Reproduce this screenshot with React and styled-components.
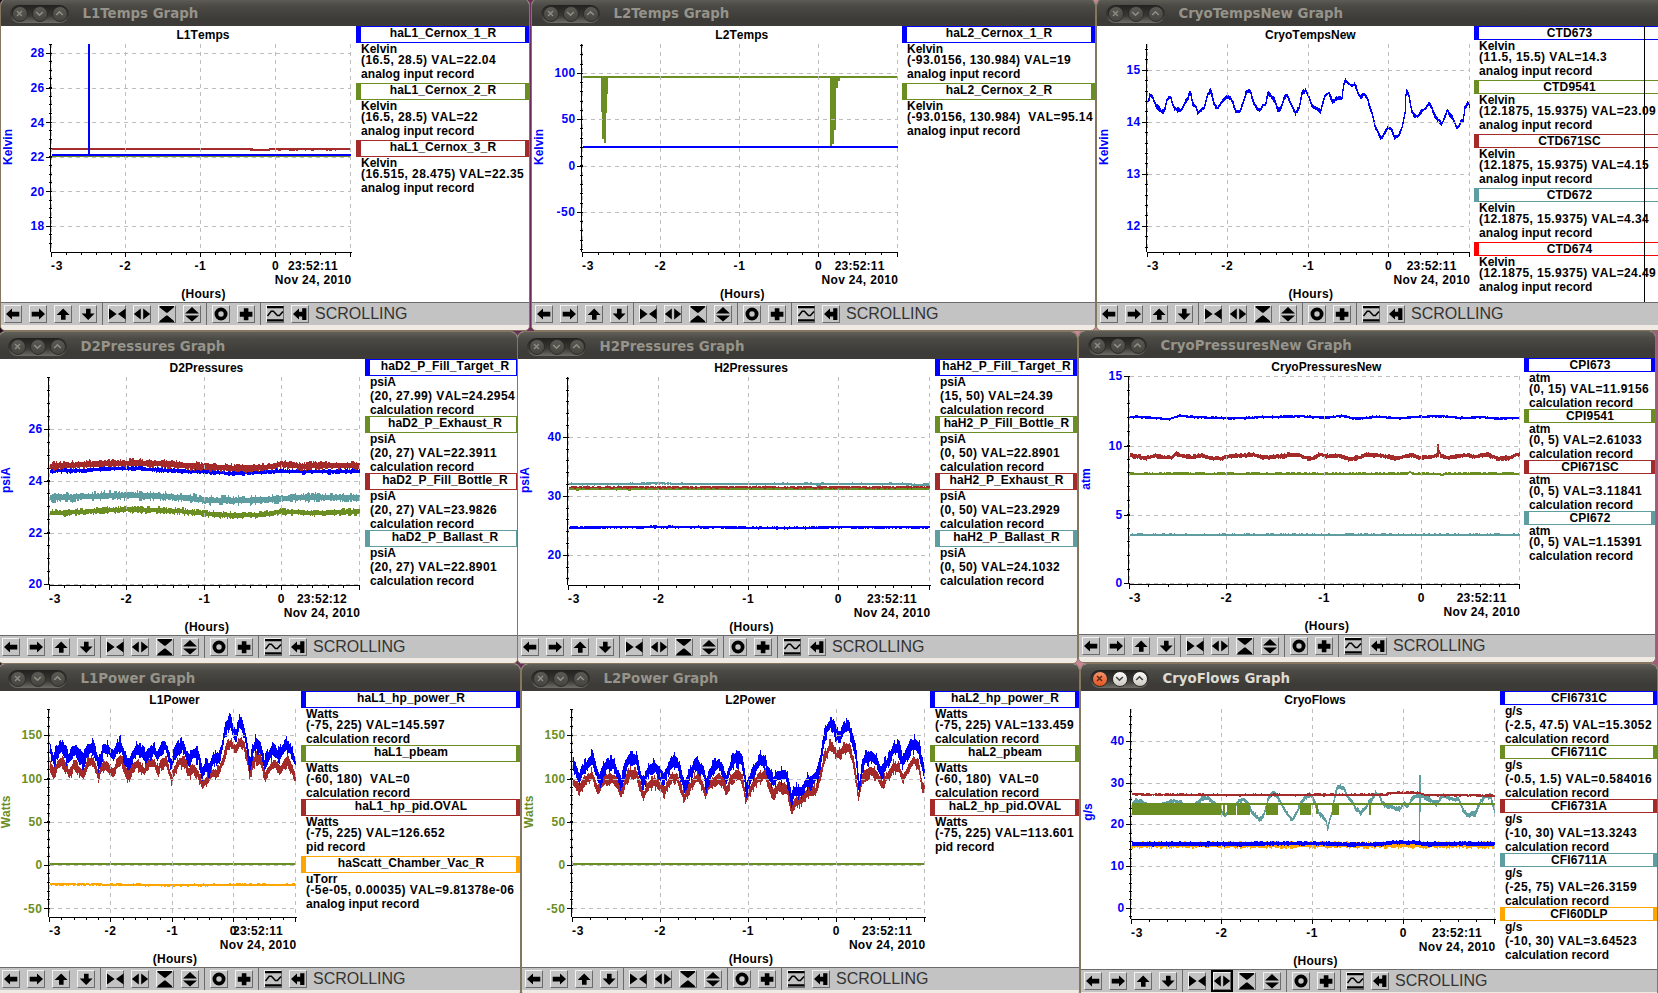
import React from "react";
import styled, { createGlobalStyle, css } from "styled-components";

const BLUE = "#0000ff";
const OLIVE = "#6b8e23";
const BROWN = "#a52a2a";
const TEAL = "#5f9ea0";
const ORANGE = "#ffa500";
const RED = "#ff0000";

const Global = createGlobalStyle`
  html, body { margin: 0; padding: 0; overflow: hidden; }
  * { box-sizing: border-box; }
`;

const Desktop = styled.main`
  position: relative;
  width: 1658px;
  height: 993px;
  overflow: hidden;
  background: linear-gradient(90deg, #1f0a1e 0, #6b2d5c 530px, #cf8797 1085px, #a35a7c 1658px);
`;

const Frame = styled.section`
  position: absolute;
  left: ${(p) => p.$x - 1}px;
  top: ${(p) => p.$y - 28}px;
  width: ${(p) => p.$w + 2}px;
  display: flex;
  flex-direction: column;
  border: 1px solid #85775f;
  border-radius: 7px 7px 5px 5px;
  overflow: hidden;
  background: #efebe4;
`;

const TitleBar = styled.header`
  height: 27px;
  flex: none;
  display: flex;
  align-items: center;
  padding: 2px 0 0 9px;
  background: linear-gradient(#605f58 0, #4b4a45 25%, #3c3b37 75%);
`;

const Pill = styled.div`
  display: flex;
  align-items: center;
  justify-content: center;
  gap: 4px;
  width: 59px;
  height: 18px;
  margin-right: 13.5px;
  border-radius: 9px;
  background: linear-gradient(#22211f, #3a3935 60%, #6e6d66);
`;

const Knob = styled.span`
  width: 16px;
  height: 16px;
  border-radius: 50%;
  border: 1px solid #2e2d2a;
  background: linear-gradient(#5b5a55, #45443f);
  color: #8f8d86;
  display: flex;
  align-items: center;
  justify-content: center;
  ${(p) =>
    p.$active &&
    css`
      background: ${p.$close ? "linear-gradient(#f6946c, #e2531f)" : "linear-gradient(#ffffff, #c9c5bd)"};
      color: ${p.$close ? "#5e2410" : "#44433e"};
    `}
  svg { width: 13px; height: 13px; }
`;

const Title = styled.h1`
  margin: 0;
  font: bold 13.33px/20px "DejaVu Sans", sans-serif;
  color: ${(p) => (p.$active ? "#dfdbd2" : "#96938a")};
  white-space: pre;
`;

const Content = styled.div`
  display: flex;
  height: ${(p) => p.$h}px;
  background: #fff;
  position: relative;
`;

const Plot = styled.svg`
  flex: none;
  display: block;
  width: ${(p) => p.$w}px;
  height: ${(p) => p.$h}px;
  font: bold 12px "Liberation Sans", Arial, sans-serif;
  font-kerning: none;
  fill: #000;
`;

const Legend = styled.aside`
  flex: 1;
  min-width: 0;
  display: flex;
  flex-direction: column;
  font: bold 12px/14px "Liberation Sans", Arial, sans-serif;
  font-kerning: none;
  color: #000;
`;

const Entry = styled.div`
  height: ${(p) => p.$h}px;
  flex: none;
`;

const Signal = styled.div`
  height: ${(p) => p.$h}px;
  display: flex;
  justify-content: center;
  padding-left: ${(p) => (p.$r === 1 ? 4 : 0)}px;
  border: 1px solid ${(p) => p.$c};
  border-left-width: 5px;
  border-right-width: ${(p) => p.$r}px;
  line-height: 12px;
  white-space: pre;
  margin-bottom: -1px;
`;

const Line = styled.div`
  height: ${(p) => p.$h}px;
  padding-left: 5px;
  white-space: pre;
`;

const Seam = styled.i`
  position: absolute;
  left: ${(p) => p.$x}px;
  top: 0;
  width: 1px;
  height: 100%;
  background: #000;
`;

const Toolbar = styled.nav`
  height: 23px;
  display: flex;
  align-items: center;
  padding: 0 0 0 3px;
  border-top: 1px solid #6b6b6b;
  background: #c3c3c3;
  margin-bottom: 5px;
`;

const Group = styled.div`
  display: flex;
  gap: 7px;
  height: 18px;
`;

const Divider = styled.span`
  width: 1px;
  height: 22px;
  margin: 0 5px;
  background: #6b6b6b;
`;

const ToolButton = styled.button`
  width: 18px;
  height: 18px;
  padding: 0;
  border: 1px solid;
  border-color: #f2f2f2 #6b6b6b #6b6b6b #f2f2f2;
  background: #c3c3c3;
  outline: ${(p) => (p.$focused ? "2px solid #000" : "none")};
  svg { display: block; margin: -1px; width: 18px; height: 18px; }
`;

const Status = styled.span`
  margin-left: 6px;
  font: 16px/22px "Liberation Sans", Arial, sans-serif;
  font-kerning: none;
  color: #333;
`;

const ICONS = {
  left: <path d="M2 9 8 3.5v3.3h7.3v4.6H8v3.1z" />,
  right: <path d="M16 9 10 3.5v3.3H2.7v4.6H10v3.1z" />,
  up: <path d="M9.2 3.4 15.6 10h-4v4.8H7V10H2.6z" />,
  down: <path d="M9.2 15 15.6 8.6h-4V3.8H7v4.8H2.6z" />,
  hIn: <path d="M1 3.4 8.6 9 1 14.6zM17.6 3.4 10 9l7.6 5.6z" />,
  hOut: <path d="M7.8 3.4 .8 9l7 5.6zM10.2 3.4l7 5.6-7 5.6z" />,
  vIn: <path d="M1.5 1H16v1.2L9.5 7.8h-1.2L1.5 2.2zM8.3 10.4h1.2L16 16v1.2H1.5V16z" />,
  vOut: <path d="M9 2 16 8.4H2zM2 10.4h14L9 16.6z" />,
  circle: <circle cx="9" cy="9" r="4.6" fill="none" stroke="#000" strokeWidth="3.8" />,
  plus: <path d="M6.8 3.2h4.6v3.6h4v5h-4v3.4H6.8v-3.4h-4v-5h4z" />,
  wave: (
    <>
      <path d="M1 1h16.4v2.2H1zM1 14.2h16.4v2.2H1z" />
      <path d="M1.5 11 5.2 6.2h2.2l4 4.4h2L17 6.4" fill="none" stroke="#000" strokeWidth="1.5" />
    </>
  ),
  enter: <path d="M2 9 8 3.6v3.2h3.2V3.2h4.2V15h-4.2v-3.6H8v3.1z" />,
};

const TOOL_GROUPS = [
  ["left", "right", "up", "down"],
  ["hIn", "hOut", "vIn", "vOut"],
  ["circle", "plus"],
  ["wave", "enter"],
];

// Extra advance that widens digits, blanks and punctuation to whole pixels.
function tracking(text) {
  let extra = 0;
  for (const ch of text) {
    if (/[0-9_]/.test(ch)) extra += 0.33;
    else if (/[ ,.]/.test(ch)) extra += 0.67;
    else if (/[()-]/.test(ch)) extra += 1;
  }
  return extra / text.length;
}

function makeRandom(seed) {
  let s = Math.round(seed) * 7919 + 17;
  return () => {
    s = (s * 1103515245 + 12345) % 2147483648;
    return s / 2147483648;
  };
}

function interpolate(points, x) {
  if (x <= points[0][0]) return points[0][1];
  for (let i = 1; i < points.length; i++) {
    if (x <= points[i][0]) {
      const [ax, ay] = points[i - 1];
      const [bx, by] = points[i];
      return ay + ((by - ay) * (x - ax)) / (bx - ax);
    }
  }
  return points[points.length - 1][1];
}

// One vertical run of pixels per column, joined to the previous column.
function bandPath(points, thick, noise, seed, x0, x1) {
  const rnd = makeRandom(seed);
  let d = "";
  let prev = null;
  let up = 0;
  let down = 0;
  for (let x = Math.round(x0); x < x1; x++) {
    const c = interpolate(points, x);
    if (rnd() < 0.7) {
      up = noise * rnd() ** 2;
      down = noise * rnd() ** 2;
    }
    let top = c - thick / 2 - up;
    let bottom = c + thick / 2 + down;
    if (prev !== null) {
      top = Math.min(top, prev - 0.5);
      bottom = Math.max(bottom, prev + 0.5);
    }
    const a = Math.round(top);
    const b = Math.max(a + 1, Math.round(bottom));
    d += `M${x} ${a}h1V${b}h-1z`;
    prev = c;
  }
  return d;
}

const pairs = (text) => text.trim().split(/\s+/).map((p) => p.split(",").map(Number));

function Trace({ series, plot, index }) {
  const [kx, dx, ky, dy] = series.scale || plot.scale;
  const px = (x) => x / kx + dx;
  const py = (y) => y / ky + dy;
  return (
    <g fill={series.color} shapeRendering="crispEdges">
      {series.points && (
        <path
          d={bandPath(
            pairs(series.points).map(([x, y]) => [px(x), py(y)]),
            series.thick,
            series.noise || 0,
            index * 31 + plot.x1,
            plot.x0,
            plot.x1
          )}
        />
      )}
      {(series.bars || []).map(([a, b, top, bottom], i) => (
        <rect key={i} x={px(a)} width={px(b) - px(a)} y={py(top)} height={py(bottom) - py(top)} />
      ))}
    </g>
  );
}

function Chart({ plot, height }) {
  const { x0, x1, bottom, hours, major, minor, axisColor } = plot;
  const top = 18;
  const xMinor = [];
  for (let k = 1; k < 20; k++) if (k % 5) xMinor.push(x1 - ((x1 - x0) * k) / 20);
  const [[va, ya], [vb, yb]] = [major[0], major[major.length - 1]];
  const perUnit = (yb - ya) / (vb - va);
  const yMinor = [];
  for (let k = -200; k < 200; k++) {
    const y = ya + k * minor * Math.abs(perUnit);
    if (y >= top && y <= bottom) yMinor.push(y);
  }
  const center = (x0 + x1) / 2;
  const snap = (v) => Math.floor(v) + 0.5;
  const label = (text, x, y, anchor = "middle", fill) => (
    <text key={text + x} x={x} y={y} textAnchor={anchor} fill={fill} letterSpacing={tracking(text)} xmlSpace="preserve">
      {text}
    </text>
  );
  return (
    <Plot $w={Math.floor(x1 + 5.7)} $h={height}>
      {label(plot.title, center + 2, 13)}
      {plot.series.map((s, i) => (
        <Trace key={i} series={s} plot={plot} index={i} />
      ))}
      <g stroke="#bebebe" strokeDasharray="4 4" shapeRendering="crispEdges">
        {major.map(([v, y]) => (
          <path key={v} d={`M${x0} ${snap(y)}H${x1}`} />
        ))}
        {[x0, ...hours, x1].map((x) => (
          <path key={x} d={`M${snap(x)} ${top}V${bottom}`} />
        ))}
      </g>
      <g stroke="#000" shapeRendering="crispEdges">
        <path d={`M${snap(x0) - 1} ${top}V${bottom}M${snap(x0) - 1} ${snap(bottom)}H${x1 + 1}`} />
        {major.map(([v, y]) => (
          <path key={v} d={`M${x0 - 6} ${snap(y)}H${x0}`} />
        ))}
        {yMinor.map((y) => (
          <path key={y} d={`M${x0 - 3} ${snap(y)}H${x0}`} />
        ))}
        {[x0, ...hours, x1].map((x) => (
          <path key={x} d={`M${snap(x)} ${bottom}v5`} />
        ))}
        {xMinor.map((x) => (
          <path key={x} d={`M${snap(x)} ${bottom}v3`} />
        ))}
      </g>
      {major.map(([v, y]) => label(String(v), x0 - 7, y + 4, "end", axisColor))}
      {label("-3", x0 + 5.5, bottom + 17.5)}
      {label("-2", hours[0], bottom + 17.5)}
      {label("-1", hours[1], bottom + 17.5)}
      {label("0", hours[2], bottom + 17.5)}
      {label(plot.time, x1 - 37.5, bottom + 17.5)}
      {label("Nov 24, 2010", x1 + 1, bottom + 32, "end")}
      {label("(Hours)", center + 2.5, bottom + 46)}
      <text transform="translate(11 121) rotate(-90)" textAnchor="middle" fill={axisColor}>
        {plot.unit}
      </text>
    </Plot>
  );
}

function GraphWindow({ win }) {
  const { x, y, w, name, active, plot, legend } = win;
  const height = win.height || 276;
  return (
    <Frame $x={x} $y={y} $w={w}>
      <TitleBar>
        <Pill>
          <Knob $active={active} $close>
            <svg viewBox="0 0 13 13"><path d="M4 4l5 5M9 4l-5 5" stroke="currentColor" strokeWidth="1.4" /></svg>
          </Knob>
          <Knob $active={active}>
            <svg viewBox="0 0 13 13"><path d="M3.2 5l3.3 3.2L9.8 5" fill="none" stroke="currentColor" strokeWidth="1.6" /></svg>
          </Knob>
          <Knob $active={active}>
            <svg viewBox="0 0 13 13"><path d="M3.2 8l3.3-3.2L9.8 8" fill="none" stroke="currentColor" strokeWidth="1.6" /></svg>
          </Knob>
        </Pill>
        <Title $active={active}>{name} Graph</Title>
      </TitleBar>
      <Content $h={height}>
        <Chart plot={plot} height={height} />
        <Legend>
          {legend.map((e) => (
            <Entry key={e.name} $h={e.pitch}>
              <Signal $h={e.head} $c={e.color} $r={win.endCap ?? 4}>
                <span style={{ letterSpacing: tracking(e.name) }}>{e.name}</span>
              </Signal>
              {e.lines.map((t, i) => (
                <Line key={i} $h={i === 0 ? e.lead : 14}>
                  <span style={{ letterSpacing: tracking(t) }}>{t}</span>
                </Line>
              ))}
            </Entry>
          ))}
        </Legend>
        {win.seam && <Seam $x={win.seam} />}
      </Content>
      <Toolbar>
        {TOOL_GROUPS.map((g, i) => (
          <React.Fragment key={i}>
            {i > 0 && <Divider />}
            <Group>
              {g.map((id) => (
                <ToolButton key={id} aria-label={id} $focused={win.focused === id}>
                  <svg viewBox="0 0 18 18">{ICONS[id]}</svg>
                </ToolButton>
              ))}
            </Group>
          </React.Fragment>
        ))}
        <Status>SCROLLING</Status>
      </Toolbar>
    </Frame>
  );
}

const entry = (name, color, unit, value, record, head, lead, pitch) => ({
  name, color, head, lead, pitch, lines: [unit, value, record],
});

const AI = "analog input record";
const CALC = "calculation record";

const WINDOWS = [
  {
    name: "L1Temps", x: 1, y: 26, w: 528,
    plot: {
      title: "L1Temps", unit: "Kelvin", axisColor: BLUE, time: "23:52:11",
      x0: 50.5, x1: 349.5, hours: [124.3, 199.4, 274.5], bottom: 226, minor: 0.5,
      major: [[28, 53 - 26], [26, 62.3], [24, 96.5], [22, 131], [20, 165.5], [18, 200.3]],
      scale: [2.904, -1, 3, -26],
      series: [
        { color: BROWN, thick: 1.8, points: "150,447 720,447 730,449 775,450 785,447 860,448 1017,448", noise: 0.6 },
        { color: OLIVE, thick: 1.5, points: "150,469 1017,469" },
        { color: BLUE, thick: 2, points: "150,465 1017,465", bars: [[256, 261.5, 132, 465]] },
      ],
    },
    legend: [
      entry("haL1_Cernox_1_R", BLUE, "Kelvin", "(16.5, 28.5) VAL=22.04", AI, 17, 11, 57),
      entry("haL1_Cernox_2_R", OLIVE, "Kelvin", "(16.5, 28.5) VAL=22", AI, 17, 11, 57),
      entry("haL1_Cernox_3_R", BROWN, "Kelvin", "(16.515, 28.475) VAL=22.35", AI, 17, 11, 57),
    ],
  },
  {
    name: "L2Temps", x: 532, y: 26, w: 563,
    plot: {
      title: "L2Temps", unit: "Kelvin", axisColor: BLUE, time: "23:52:11",
      x0: 50.5, x1: 365.2, hours: [128.4, 207.6, 286.4], bottom: 226, minor: 10,
      major: [[100, 47.3], [50, 93.3], [0, 140.3], [-50, 186.3]],
      scale: [2.703, -7, 3, -26],
      series: [
        {
          color: OLIVE, thick: 2, points: "155,231 1006,231",
          bars: [
            [206, 210, 231, 335], [209, 215, 231, 417], [214, 219, 231, 430], [217, 222, 231, 338], [220, 224.5, 231, 282],
            [825, 830, 231, 445], [829, 834, 231, 432], [833, 841, 231, 391], [840, 846, 231, 265], [845, 851, 231, 242],
          ],
        },
        { color: BLUE, thick: 2, points: "155,440 1006,440" },
      ],
    },
    legend: [
      entry("haL2_Cernox_1_R", BLUE, "Kelvin", "(-93.0156, 130.984) VAL=19", AI, 17, 11, 57),
      entry("haL2_Cernox_2_R", OLIVE, "Kelvin", "(-93.0156, 130.984)  VAL=95.14", AI, 17, 11, 57),
    ],
  },
  {
    name: "CryoTempsNew", x: 1097, y: 26, w: 567, seam: 547,
    plot: {
      title: "CryoTempsNew", unit: "Kelvin", axisColor: BLUE, time: "23:52:11",
      x0: 50.5, x1: 372.2, hours: [130.3, 211.4, 291.5], bottom: 226, minor: 0.2,
      major: [[15, 44.3], [14, 96.3], [13, 148.3], [12, 200.3]],
      scale: [2.761, -7, 3, -26],
      series: [
        {
          color: BLUE, thick: 2.4, noise: 1.8,
          points: `158,315 163,285 170,290 180,318 190,325 195,335 203,335 210,300 220,290 228,320 240,330 250,332 260,310 267,300
            275,272 280,308 290,320 296,340 305,330 313,325 322,285 332,272 340,310 350,325 360,310 370,295 382,290 392,305 400,335
            412,335 420,310 430,275 440,272 450,310 460,325 468,332 475,315 482,315 490,278 500,290 508,300 516,330 525,325 535,290
            542,285 550,305 565,340 575,325 583,280 593,270 602,290 612,320 622,325 635,333 645,290 658,278 668,305 680,295 693,295
            698,255 703,240 712,250 722,258 730,252 738,280 748,292 755,280 765,298 770,320 778,345 785,380 795,400 802,418 808,405
            815,395 820,383 830,385 838,412 850,408 860,380 867,340 870,280 873,270 880,295 885,330 893,345 903,350 912,335 925,325
            935,308 942,325 950,345 960,360 970,370 978,350 985,330 992,345 1000,355 1010,382 1017,380 1022,365 1028,365 1032,325
            1042,310 1047,318`,
        },
      ],
    },
    legend: [
      entry("CTD673", BLUE, "Kelvin", "(11.5, 15.5) VAL=14.3", AI, 14, 11, 54),
      entry("CTD9541", OLIVE, "Kelvin", "(12.1875, 15.9375) VAL=23.09", AI, 14, 11, 54),
      entry("CTD671SC", BROWN, "Kelvin", "(12.1875, 15.9375) VAL=4.15", AI, 14, 11, 54),
      entry("CTD672", TEAL, "Kelvin", "(12.1875, 15.9375) VAL=4.34", AI, 14, 11, 54),
      entry("CTD674", RED, "Kelvin", "(12.1875, 15.9375) VAL=24.49", AI, 14, 11, 54),
    ],
  },
  {
    name: "D2Pressures", x: -1, y: 359, w: 518, endCap: 1,
    plot: {
      title: "D2Pressures", unit: "psiA", axisColor: BLUE, time: "23:52:12",
      x0: 50.5, x1: 360.4, hours: [127.4, 205.5, 282.3], bottom: 226, minor: 0.5,
      major: [[26, 70.3], [24, 122.3], [22, 174.3], [20, 225.3]],
      scale: [2.958, 1, 3, -34],
      series: [
        { color: BLUE, thick: 3, noise: 1.6, points: "148,438 250,436 300,432 400,430 480,436 600,440 680,445 760,442 830,438 900,440 1062,439" },
        { color: BROWN, thick: 5, noise: 2.4, points: "148,424 220,420 290,416 400,414 490,416 560,422 640,428 700,430 780,428 830,418 870,420 890,426 930,420 1062,422" },
        { color: TEAL, thick: 5, noise: 3, points: "148,518 250,515 380,510 480,514 560,520 620,526 760,526 830,520 920,516 1062,518" },
        { color: OLIVE, thick: 4, noise: 2.2, points: "148,564 220,562 300,556 380,553 480,556 560,561 620,568 700,572 780,568 830,560 940,564 1062,560" },
      ],
    },
    legend: [
      entry("haD2_P_Fill_Target_R", BLUE, "psiA", "(20, 27.99) VAL=24.2954", CALC, 17, 14, 57),
      entry("haD2_P_Exhaust_R", OLIVE, "psiA", "(20, 27) VAL=22.3911", CALC, 17, 14, 57),
      entry("haD2_P_Fill_Bottle_R", BROWN, "psiA", "(20, 27) VAL=23.9826", CALC, 17, 14, 57),
      entry("haD2_P_Ballast_R", TEAL, "psiA", "(20, 27) VAL=22.8901", CALC, 17, 14, 57),
    ],
  },
  {
    name: "H2Pressures", x: 518, y: 359, w: 559,
    plot: {
      title: "H2Pressures", unit: "psiA", axisColor: BLUE, time: "23:52:11",
      x0: 50.5, x1: 411.5, hours: [140.7, 230.3, 320.2], bottom: 226, minor: 2,
      major: [[40, 78.3], [30, 137.3], [20, 196.3]],
      scale: [2.703, -8, 3, -34],
      series: [
        { color: TEAL, thick: 1.8, noise: 0.7, points: "158,477 300,477 400,475 500,477 1060,477 1110,481 1134,478" },
        { color: OLIVE, thick: 1.8, noise: 0.7, points: "158,492 1134,491" },
        { color: BROWN, thick: 1.6, noise: 0.7, points: "158,487 1134,487" },
        { color: BLUE, thick: 2, noise: 0.8, points: "158,608 400,606 560,607 720,609 900,607 1134,607" },
      ],
    },
    legend: [
      entry("haH2_P_Fill_Target_R", BLUE, "psiA", "(15, 50) VAL=24.39", CALC, 17, 14, 57),
      entry("haH2_P_Fill_Bottle_R", OLIVE, "psiA", "(0, 50) VAL=22.8901", CALC, 17, 14, 57),
      entry("haH2_P_Exhaust_R", BROWN, "psiA", "(0, 50) VAL=23.2929", CALC, 17, 14, 57),
      entry("haH2_P_Ballast_R", TEAL, "psiA", "(0, 50) VAL=24.1032", CALC, 17, 14, 57),
    ],
  },
  {
    name: "CryoPressuresNew", x: 1079, y: 358, w: 576,
    plot: {
      title: "CryoPressuresNew", unit: "atm", axisColor: BLUE, time: "23:52:11",
      x0: 50.5, x1: 440.2, hours: [147.4, 245.2, 342.3], bottom: 226, minor: 1,
      major: [[15, 18.3], [10, 88.3], [5, 157.3], [0, 225.3]],
      scale: [2.667, -9, 3, -33],
      series: [
        { color: BLUE, thick: 1.9, noise: 0.8, points: "158,278 175,275 220,279 265,282 290,273 350,277 400,279 440,280 520,276 620,274 670,278 725,273 760,281 820,275 870,280 930,276 985,273 1040,279 1090,276 1140,281 1198,279" },
        {
          color: BROWN, thick: 3.2, noise: 1.3,
          bars: [[980, 984, 357, 395]],
          points: `158,390 180,395 200,400 225,392 250,398 270,398 283,387 300,393 325,397 350,390 375,400 400,400 430,393 460,392
            485,388 510,397 540,397 570,392 607,388 625,398 645,400 665,388 685,394 715,392 745,403 770,398 790,390 830,392 865,400
            890,395 910,390 930,398 955,398 975,392 983,378 988,394 1010,398 1050,390 1080,395 1110,388 1140,400 1170,400 1190,388 1198,388`,
        },
        { color: OLIVE, thick: 2, noise: 0.8, points: "158,446 895,446 905,441 915,446 985,446 992,451 998,446 1198,446" },
        { color: TEAL, thick: 1.7, noise: 0.7, points: "158,629 1198,629" },
      ],
    },
    legend: [
      entry("CPI673", BLUE, "atm", "(0, 15) VAL=11.9156", CALC, 14, 11, 51),
      entry("CPI9541", OLIVE, "atm", "(0, 5) VAL=2.61033", CALC, 14, 11, 51),
      entry("CPI671SC", BROWN, "atm", "(0, 5) VAL=3.11841", CALC, 14, 11, 51),
      entry("CPI672", TEAL, "atm", "(0, 5) VAL=1.15391", CALC, 14, 11, 51),
    ],
  },
  {
    name: "L1Power", x: -1, y: 691, w: 521,
    plot: {
      title: "L1Power", unit: "Watts", axisColor: OLIVE, time: "23:52:11",
      x0: 50.5, x1: 296.5, hours: [111.5, 173.4, 234.3], bottom: 226, minor: 10,
      major: [[150, 44.3], [100, 88.3], [50, 131.3], [0, 174.3], [-50, 217.6]],
      scale: [2.958, 1, 3, -36],
      series: [
        {
          color: BROWN, thick: 7, noise: 5,
          points: `148,330 157,350 170,330 185,320 203,355 220,325 232,345 245,358 258,325 275,318 290,365 300,335 315,330 333,358
            345,325 358,315 377,365 390,340 405,325 425,350 440,325 455,325 465,350 475,325 490,320 505,370 515,345 530,320 545,320
            557,355 570,340 583,355 597,390 610,375 625,355 645,355 660,310 668,275 680,265 690,275 697,285 708,260 720,270 730,310
            737,365 745,330 755,310 770,320 783,365 800,335 812,325 825,350 840,325 850,315 862,345 875,370`,
        },
        {
          color: BLUE, thick: 8.5, noise: 6,
          points: `148,285 157,315 165,300 180,275 192,295 200,315 210,295 225,285 235,305 245,320 255,285 275,275 283,300 290,335
            298,305 305,280 320,285 335,305 345,280 355,270 365,300 377,335 387,310 400,285 415,290 430,310 440,295 455,280 463,305
            475,280 487,270 497,300 505,330 515,300 525,280 540,270 550,300 560,315 570,295 585,300 597,360 605,335 618,340 630,310
            645,310 655,280 662,230 670,215 680,200 690,225 697,240 705,205 715,205 725,250 732,290 737,335 745,290 755,265 770,275
            780,330 790,310 805,280 815,290 825,305 835,285 848,270 858,285 868,310 875,330`,
        },
        { color: OLIVE, thick: 2, points: "148,627 874,627" },
        { color: ORANGE, thick: 1.8, noise: 0.8, points: "148,688 400,689 480,691 600,690 640,689 720,689 874,690" },
      ],
    },
    legend: [
      entry("haL1_hp_power_R", BLUE, "Watts", "(-75, 225) VAL=145.597", CALC, 17, 11, 54),
      entry("haL1_pbeam", OLIVE, "Watts", "(-60, 180)  VAL=0", CALC, 17, 11, 54),
      entry("haL1_hp_pid.OVAL", BROWN, "Watts", "(-75, 225) VAL=126.652", "pid record", 17, 11, 57),
      entry("haScatt_Chamber_Vac_R", ORANGE, "uTorr", "(-5e-05, 0.00035) VAL=9.81378e-06", AI, 17, 11, 57),
    ],
  },
  {
    name: "L2Power", x: 522, y: 691, w: 557,
    plot: {
      title: "L2Power", unit: "Watts", axisColor: OLIVE, time: "23:52:11",
      x0: 50.5, x1: 402.6, hours: [138.2, 226.2, 314.2], bottom: 226, minor: 10,
      major: [[150, 44.3], [100, 88.3], [50, 131.3], [0, 174.3], [-50, 217.6]],
      scale: [3, 43, 3, 9],
      series: [
        {
          color: BROWN, thick: 7, noise: 5,
          points: `22,245 40,265 55,245 80,225 97,270 110,250 130,235 150,240 160,265 167,285 180,240 195,220 215,225 225,265 235,290
            245,260 265,245 280,255 298,275 315,235 335,230 345,265 357,295 370,265 385,245 397,230 410,255 420,285 428,260 445,245
            460,230 475,250 484,275 495,240 515,220 530,235 540,300 550,280 565,250 585,230 600,225 612,265 625,280 640,260 665,270
            677,325 690,305 710,300 725,280 750,275 765,230 775,180 793,140 805,150 820,165 835,145 850,145 865,190 872,240 878,295
            885,260 895,225 915,215 935,225 950,255 965,230 985,200 1000,205 1013,235 1030,205 1045,180 1060,200 1068,255 1078,265`,
        },
        {
          color: BLUE, thick: 8.5, noise: 6,
          points: `22,190 35,215 42,240 50,215 65,195 80,175 88,200 97,225 103,238 115,210 125,195 145,195 155,220 167,250 175,215
            190,180 215,180 222,215 232,258 242,225 255,205 268,200 280,215 295,238 310,200 325,185 337,190 345,225 358,255 372,225
            385,200 395,185 405,205 415,215 422,255 428,235 440,210 460,190 470,210 483,240 495,200 510,175 528,180 535,215 543,265
            555,235 570,205 585,180 600,185 607,220 625,245 635,225 660,225 670,250 678,300 686,275 700,275 710,275 720,250 740,240
            755,225 765,185 775,120 785,85 797,70 805,85 817,110 825,110 835,85 850,80 860,115 870,150 876,220 880,270 885,235
            892,195 900,170 920,170 935,185 945,215 955,205 970,180 985,145 1000,145 1010,185 1022,165 1035,140 1050,130 1062,150
            1068,180 1075,215 1079,225`,
        },
        { color: OLIVE, thick: 2, scale: [2.727, -7, 3, -36], points: "156,627 1117,627" },
      ],
    },
    legend: [
      entry("haL2_hp_power_R", BLUE, "Watts", "(-75, 225) VAL=133.459", CALC, 17, 11, 54),
      entry("haL2_pbeam", OLIVE, "Watts", "(-60, 180)  VAL=0", CALC, 17, 11, 54),
      entry("haL2_hp_pid.OVAL", BROWN, "Watts", "(-75, 225) VAL=113.601", "pid record", 17, 11, 54),
    ],
  },
  {
    name: "CryoFlows", x: 1081, y: 691, w: 576, height: 278, active: true, focused: "hOut",
    plot: {
      title: "CryoFlows", unit: "g/s", axisColor: BLUE, time: "23:52:11",
      x0: 50.5, x1: 413.5, hours: [140.5, 231.2, 322.3], bottom: 228, minor: 2,
      major: [[40, 50.3], [30, 92.3], [20, 133.3], [10, 175.3], [0, 217.3]],
      scale: [3, 44, 3, 74],
      series: [
        { color: ORANGE, thick: 4.4, noise: 2, points: "20,240 1108,240" },
        {
          color: TEAL, thick: 3, noise: 2,
          bars: [[881, 884, 92, 230], [883, 887, 30, 140]],
          points: `20,117 30,108 50,110 60,118 75,125 130,115 145,107 160,112 180,120 200,125 220,112 230,100 250,100 262,112 275,125
            290,145 300,150 310,140 325,125 340,108 355,103 368,115 380,145 395,155 403,165 412,155 420,130 428,100 440,85 455,92
            465,112 480,140 500,165 515,140 528,110 540,95 555,90 565,105 578,140 590,155 600,165 606,190 610,170 618,145 625,105
            635,67 655,67 662,90 680,110 690,130 705,143 718,130 735,108 750,85 762,90 770,115 785,125 800,125 815,132 825,130
            835,115 845,125 855,110 865,95 880,92 888,92 905,100 920,108 935,115 950,92 965,95 985,105 1000,103 1010,130 1025,150
            1035,150 1050,145 1065,110 1080,95 1095,95 1102,125 1107,138`,
        },
        {
          color: OLIVE, thick: 2, points: "20,117 1108,117",
          bars: [
            [21, 290, 117, 151], [293, 299, 117, 151], [306, 333, 117, 151], [336, 375, 117, 151], [424, 459, 117, 151],
            [526, 558, 117, 151], [574, 578, 117, 148], [621, 642, 117, 151], [733, 737, 117, 151],
          ],
        },
        { color: BROWN, thick: 1.8, noise: 0.8, points: "20,88 350,90 780,89 800,83 880,83 900,90 1108,92" },
        { color: BLUE, thick: 3.4, noise: 1, points: "20,237 350,237 480,235 600,236 680,239 770,237 800,232 880,233 890,237 1000,236 1108,237" },
      ],
    },
    legend: [
      entry("CFI6731C", BLUE, "g/s", "(-2.5, 47.5) VAL=15.3052", CALC, 14, 14, 54),
      entry("CFI6711C", OLIVE, "g/s", "(-0.5, 1.5) VAL=0.584016", CALC, 14, 14, 54),
      entry("CFI6731A", BROWN, "g/s", "(-10, 30) VAL=13.3243", CALC, 14, 14, 54),
      entry("CFI6711A", TEAL, "g/s", "(-25, 75) VAL=26.3159", CALC, 14, 14, 54),
      entry("CFI60DLP", ORANGE, "g/s", "(-10, 30) VAL=3.64523", CALC, 14, 14, 54),
    ],
  },
];

export default function App() {
  return (
    <>
      <Global />
      <Desktop>
        {WINDOWS.map((w) => (
          <GraphWindow key={w.name} win={w} />
        ))}
      </Desktop>
    </>
  );
}
